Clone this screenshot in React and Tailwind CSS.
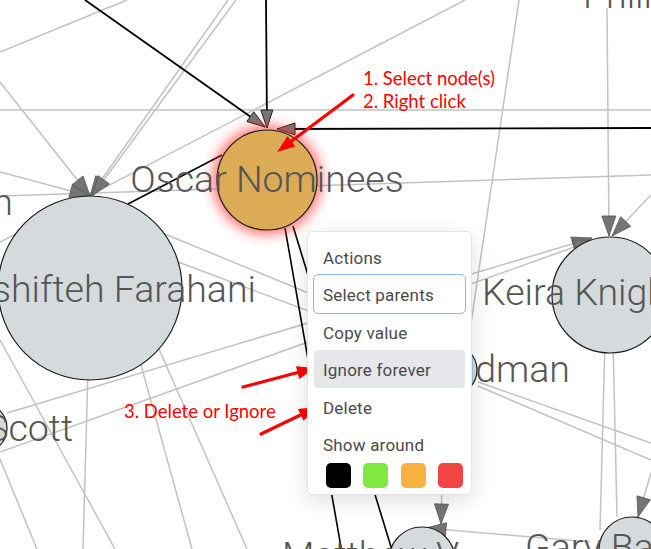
import React from 'react';

// graph edges, [x1, y1, x2, y2]
const GRAY_EDGES = [
  [0, 52, 127, 0],
  [0, 242, 465, 0],
  [0, 110, 651, 110],
  [0, 196, 651, 175],
  [519, 0, 470, 330],
  [160, 232, 452, 352],
  [178, 262, 452, 365],
  [478, 382, 651, 443],
  [478, 386, 651, 460],
  [0, 340, 115, 549],
  [-10, 435, 37, 549],
  [88, 370, 83, 549],
  [134, 340, 192, 549],
  [155, 340, 247, 549],
  [605, 340, 600, 530],
  [613, 340, 617, 517],
];

// edges that end in an arrow head: [fromX, fromY, tipX, tipY]
const GRAY_ARROWS = [
  [0, 172, 90, 196],
  [0, 82, 90, 196],
  [228, 0, 90, 196],
  [236, 0, 92, 196],
  [607, 8, 609, 236],
  [651, 195, 612, 236],
  [7, 413, 592, 238],
  [0, 452, 594, 240],
  [651, 473, 638, 517],
  [590, 542, 426, 528],
  [443, 440, 441, 524],
];

const BLACK_ARROWS = [
  [85, 0, 265, 127],
  [266, 0, 267, 128],
  [651, 128, 277, 129],
];

const BLACK_EDGES = [
  [128, 204, 222, 155],
  [285, 228, 345, 570],
  [293, 226, 395, 560],
];

const NODES = [
  { x: 90, y: 288, r: 92 },
  { x: 610, y: 295, r: 58 },
  { x: 452, y: 370, r: 25 },
  { x: -18, y: 428, r: 25 },
  { x: 422, y: 560, r: 33 },
  { x: 632, y: 550, r: 33 },
];

const LABELS = [
  { t: 'Philip Seymour', x: 583, y: 8, a: 'start' },
  { t: 'Sean Penn', x: 13, y: 215, a: 'end' },
  { t: 'Golshifteh Farahani', x: 256, y: 302, a: 'end' },
  { t: 'Keira Knightley', x: 482, y: 305, a: 'start' },
  { t: 'Goldman', x: 570, y: 382, a: 'end' },
  { t: 'Scott', x: 73, y: 441, a: 'end' },
  { t: 'Matthew V', x: 282, y: 568, a: 'start' },
  { t: 'Gary Barlow', x: 525, y: 560, a: 'start' },
  { t: 'Oscar Nominees', x: 267, y: 192, a: 'middle' },
];

const head = (fx, fy, tx, ty, len = 18, hw = 6) => {
  const dx = tx - fx;
  const dy = ty - fy;
  const d = Math.hypot(dx, dy);
  const ux = dx / d;
  const uy = dy / d;
  const bx = tx - ux * len;
  const by = ty - uy * len;
  const px = -uy * hw;
  const py = ux * hw;
  return `${tx},${ty} ${bx + px},${by + py} ${bx - px},${by - py}`;
};

const RedArrow = ({ from, to }) => {
  const [fx, fy] = from;
  const [tx, ty] = to;
  const d = Math.hypot(tx - fx, ty - fy);
  const ex = tx - ((tx - fx) / d) * 12;
  const ey = ty - ((ty - fy) / d) * 12;
  return (
    <g>
      <line x1={fx} y1={fy} x2={ex} y2={ey} stroke="#ff0000" strokeWidth="3.2" strokeLinecap="round" />
      <polygon points={head(fx, fy, tx, ty, 18, 6.5)} fill="#ff0000" />
    </g>
  );
};

const Graph = () => (
  <svg className="absolute inset-0" width="651" height="549" viewBox="0 0 651 549">
    <defs>
      <filter id="glow" x="-50%" y="-50%" width="200%" height="200%">
        <feGaussianBlur stdDeviation="6" />
      </filter>
    </defs>

    {GRAY_EDGES.map(([x1, y1, x2, y2], i) => (
      <line key={'g' + i} x1={x1} y1={y1} x2={x2} y2={y2} stroke="#c2c2c2" strokeWidth="1.5" />
    ))}
    {GRAY_ARROWS.map(([x1, y1, x2, y2], i) => (
      <line key={'ga' + i} x1={x1} y1={y1} x2={x2} y2={y2} stroke="#c2c2c2" strokeWidth="1.5" />
    ))}
    {BLACK_EDGES.map(([x1, y1, x2, y2], i) => (
      <line key={'b' + i} x1={x1} y1={y1} x2={x2} y2={y2} stroke="#000" strokeWidth="1.6" />
    ))}
    {BLACK_ARROWS.map(([x1, y1, x2, y2], i) => (
      <line key={'ba' + i} x1={x1} y1={y1} x2={x2} y2={y2} stroke="#000" strokeWidth="1.8" />
    ))}

    {GRAY_ARROWS.map(([x1, y1, x2, y2], i) => (
      <polygon key={'gh' + i} points={head(x1, y1, x2, y2, 20, 7)} fill="#747474" stroke="#555" strokeWidth="0.8" />
    ))}
    {BLACK_ARROWS.map(([x1, y1, x2, y2], i) => (
      <polygon key={'bh' + i} points={head(x1, y1, x2, y2, 18, 6)} fill="#777" stroke="#222" strokeWidth="1" />
    ))}

    {NODES.map((n, i) => (
      <circle key={'n' + i} cx={n.x} cy={n.y} r={n.r} fill="#d5dadd" stroke="#1a1a1a" strokeWidth="1.2" />
    ))}

    <circle cx="267" cy="180" r="55" fill="#ff2020" opacity="0.6" filter="url(#glow)" />
    <circle cx="267" cy="180" r="50" fill="#dcab56" stroke="#1a1a1a" strokeWidth="1.2" />

    {LABELS.map((l, i) => (
      <text
        key={'l' + i}
        x={l.x}
        y={l.y}
        textAnchor={l.a}
        fontFamily="Roboto, sans-serif"
        fontWeight="300"
        fontSize="37.5"
        fill="#555555"
      >
        {l.t}
      </text>
    ))}

    <g fontFamily="Lato, 'Open Sans', sans-serif" fontSize="18.5" fill="#ff0000">
      <text x="363" y="85">1. Select node(s)</text>
      <text x="363" y="108">2. Right click</text>
      <text x="124" y="418">3. Delete or Ignore</text>
    </g>
    <RedArrow from={[353, 95]} to={[277, 152]} />
    <RedArrow from={[243, 387]} to={[315, 368]} />
    <RedArrow from={[261, 434]} to={[317, 407]} />
  </svg>
);

const MenuItem = ({ label, active, focused }) => (
  <div
    className={`mx-[6px] px-[9px] h-[37.5px] pt-[8px] leading-[24px] rounded-[4px] ${
      active ? 'bg-[#e5e7eb]' : ''
    } ${focused ? 'outline-solid outline-[1.5px] outline-[#95b7e2] outline-offset-[0.5px]' : ''}`}
  >
    {label}
  </div>
);

const SWATCHES = ['bg-[#000000]', 'bg-[#80e83f]', 'bg-[#f7b23f]', 'bg-[#f34444]'];

const ContextMenu = () => (
  <div className="absolute left-[307px] top-[231px] w-[165px] rounded-[6px] bg-white border border-[#e4e4e4] shadow-[0_6px_22px_rgba(0,0,0,0.13)] pt-[5.5px] pb-[6px] font-['Roboto',sans-serif] text-[17px] tracking-[0.2px] text-[#4a4a4a]">
    <MenuItem label="Actions" />
    <MenuItem label="Select parents" focused />
    <MenuItem label="Copy value" />
    <MenuItem label="Ignore forever" active />
    <MenuItem label="Delete" />
    <MenuItem label="Show around" />
    <div className="flex justify-between ml-[18px] mr-[8px]">
      {SWATCHES.map((c) => (
        <div key={c} className={`w-[25px] h-[25px] rounded-[5px] ${c}`} />
      ))}
    </div>
  </div>
);

export default function App() {
  return (
    <div className="relative w-[651px] h-[549px] overflow-hidden bg-white">
      <Graph />
      <ContextMenu />
    </div>
  );
}
